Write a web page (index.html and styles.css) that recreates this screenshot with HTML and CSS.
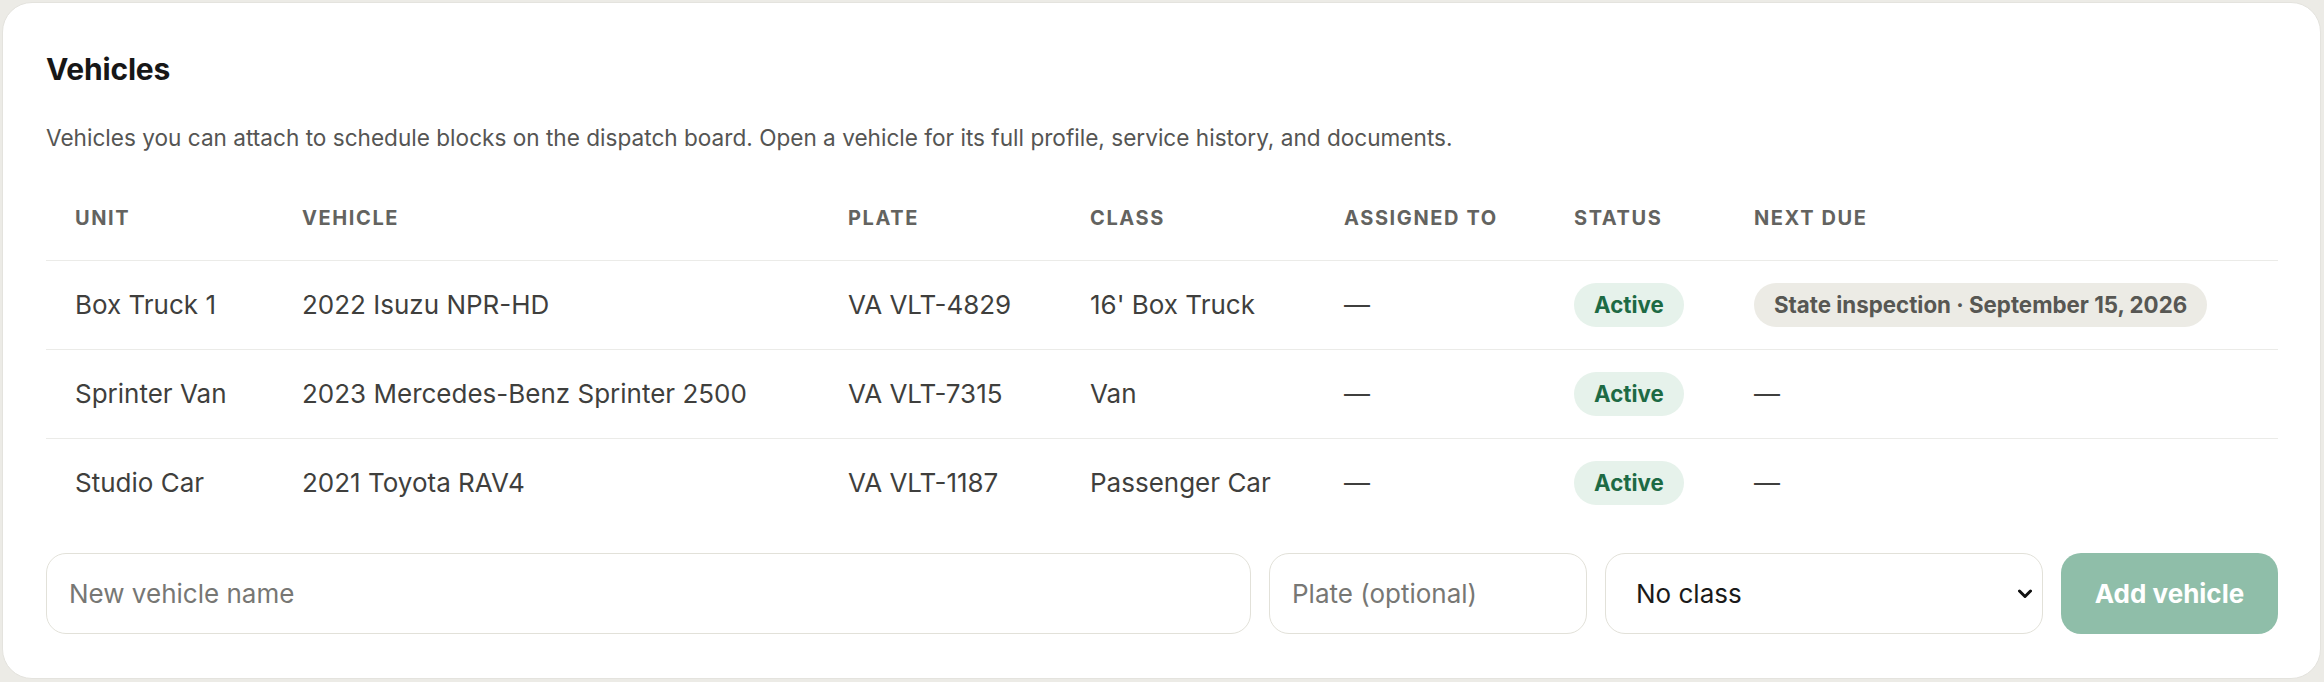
FILE: index.html
```html
<!DOCTYPE html>
<html lang="en">
<head>
<meta charset="utf-8">
<title>Vehicles</title>
<link rel="stylesheet" href="styles.css">
</head>
<body>
<section class="card">
  <h1 class="title">Vehicles</h1>
  <p class="subtitle">Vehicles you can attach to schedule blocks on the dispatch board. Open a vehicle for its full profile, service history, and documents.</p>
  <table class="vehicles">
    <colgroup>
      <col class="c-unit"><col class="c-vehicle"><col class="c-plate"><col class="c-class"><col class="c-assigned"><col class="c-status"><col class="c-due">
    </colgroup>
    <thead>
      <tr><th>Unit</th><th>Vehicle</th><th>Plate</th><th>Class</th><th>Assigned to</th><th>Status</th><th>Next due</th></tr>
    </thead>
    <tbody>
      <tr>
        <td>Box Truck 1</td><td>2022 Isuzu NPR-HD</td><td>VA VLT-4829</td><td>16' Box Truck</td><td>—</td>
        <td><span class="badge badge-active">Active</span></td>
        <td><span class="badge badge-due">State inspection · September 15, 2026</span></td>
      </tr>
      <tr>
        <td>Sprinter Van</td><td>2023 Mercedes-Benz Sprinter 2500</td><td>VA VLT-7315</td><td>Van</td><td>—</td>
        <td><span class="badge badge-active">Active</span></td>
        <td>—</td>
      </tr>
      <tr>
        <td>Studio Car</td><td>2021 Toyota RAV4</td><td>VA VLT-1187</td><td>Passenger Car</td><td>—</td>
        <td><span class="badge badge-active">Active</span></td>
        <td>—</td>
      </tr>
    </tbody>
  </table>
  <form class="add-form">
    <input class="field field-name" type="text" placeholder="New vehicle name">
    <input class="field field-plate" type="text" placeholder="Plate (optional)">
    <div class="select-wrap">
      <select class="field field-class">
        <option>No class</option>
        <option>16' Box Truck</option>
        <option>Van</option>
        <option>Passenger Car</option>
      </select>
      <svg class="chevron" viewBox="0 0 14 10" width="14" height="10" aria-hidden="true"><path d="M1.5 2 L7 7.5 L12.5 2" fill="none" stroke="#111" stroke-width="3" stroke-linecap="round" stroke-linejoin="round"/></svg>
    </div>
    <button class="btn-add" type="button" disabled>Add vehicle</button>
  </form>
</section>
</body>
</html>
```
FILE: styles.css
```css
html, body {
  margin: 0;
  padding: 0;
}
body {
  background: #ecebe6;
  font-family: Inter, "Noto Sans", "Liberation Sans", sans-serif;
  color: #3d3d3b;
}
.card {
  box-sizing: border-box;
  margin: 2px 3px 0 2px;
  height: 677px;
  background: #fff;
  border: 1px solid #e4e3de;
  border-radius: 30px;
  padding: 0 42px 0 43px;
  overflow: hidden;
}
.title {
  margin: 48px 0 0;
  font-size: 30px;
  line-height: 36px;
  font-weight: 700;
  color: #171717;
  letter-spacing: -0.2px;
}
.subtitle {
  margin: 36px 0 0;
  font-size: 22.6px;
  line-height: 30px;
  color: #555553;
}
.vehicles {
  margin-top: 27px;
  width: 2232px;
  border-collapse: collapse;
  table-layout: fixed;
}
.c-unit { width: 227px; }
.c-vehicle { width: 546px; }
.c-plate { width: 242px; }
.c-class { width: 254px; }
.c-assigned { width: 230px; }
.c-status { width: 180px; }
.c-due { width: 553px; }
.vehicles th {
  text-align: left;
  padding: 26px 0 30px 29px;
  font-size: 20px;
  line-height: 24px;
  font-weight: 700;
  text-transform: uppercase;
  letter-spacing: 0.08em;
  color: #636360;
  border-bottom: 1.5px solid #ebebe8;
  white-space: nowrap;
}
.vehicles td {
  height: 89px;
  box-sizing: border-box;
  padding: 0 0 0 29px;
  font-size: 26px;
  line-height: 32px;
  color: #3f3f3d;
  vertical-align: middle;
  white-space: nowrap;
}
.vehicles tbody tr + tr td {
  border-top: 1.5px solid #ebebe8;
}
.badge {
  display: inline-block;
  height: 44px;
  line-height: 44px;
  padding: 0 20px;
  border-radius: 22px;
  font-size: 22.3px;
  font-weight: 700;
  vertical-align: middle;
}
.badge-active {
  background: #e6f2eb;
  color: #1d6a44;
}
.badge-due {
  background: #ecebe5;
  color: #575753;
}
.add-form {
  display: flex;
  gap: 18px;
  margin-top: 25px;
  width: 2232px;
}
.field {
  box-sizing: border-box;
  height: 81px;
  border: 1.5px solid #e2e1d9;
  border-radius: 20px;
  background: #fff;
  font-family: inherit;
  font-size: 26px;
  color: #1a1a1a;
  padding: 0 22px;
  outline: none;
}
.field::placeholder {
  color: #777774;
}
.field-name {
  flex: 1 1 auto;
  min-width: 0;
}
.field-plate {
  flex: 0 0 318px;
  width: 318px;
}
.select-wrap {
  position: relative;
  flex: 0 0 438px;
}
.field-class {
  width: 100%;
  appearance: none;
  -webkit-appearance: none;
  padding-left: 30px;
}
.chevron {
  position: absolute;
  right: 11px;
  top: 36px;
  pointer-events: none;
}
.btn-add {
  flex: 0 0 217px;
  height: 81px;
  border: none;
  border-radius: 20px;
  background: #8fbea9;
  color: #fff;
  font-family: inherit;
  font-size: 26px;
  font-weight: 700;
  padding: 0;
}
```
